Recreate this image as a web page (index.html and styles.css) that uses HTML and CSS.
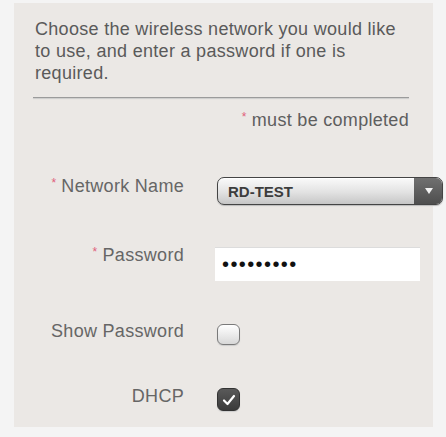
FILE: index.html
```html
<!DOCTYPE html>
<html lang="en">
<head>
  <meta charset="UTF-8" />
  <title>Wireless Network</title>
  <link rel="stylesheet" href="styles.css">
</head>
<body>
  <div class="panel">
    <p class="intro">Choose the wireless network you would like to use, and enter a password if one is required.</p>
    <div class="divider"></div>
    <div class="required-note"><span class="req">*</span> must be completed</div>

    <div class="fields">
      <div class="row">
        <label class="label"><span class="req">*</span> Network Name</label>
        <div class="select">
          <span class="select-value">RD-TEST</span>
          <span class="select-arrow"></span>
        </div>
      </div>
      <div class="row row-password">
        <label class="label"><span class="req">*</span> Password</label>
        <div class="text-input">•••••••••</div>
      </div>
      <div class="row row-check">
        <label class="label">Show Password</label>
        <div class="check"></div>
      </div>
      <div class="row row-dhcp">
        <label class="label">DHCP</label>
        <div class="check checked">
          <svg width="14" height="12" viewBox="0 0 14 12"><path d="M2 6.5 L5.5 10 L12 2" fill="none" stroke="#fff" stroke-width="2.2" stroke-linecap="round" stroke-linejoin="round"/></svg>
        </div>
      </div>
    </div>
  </div>
</body>
</html>
```

FILE: styles.css
```css
body {
  margin: 0;
  background: #f4f4f4;
  font-family: "Liberation Sans", Arial, sans-serif;
  height: 437px;
  overflow: hidden;
}

.panel {
  margin: 3px 0 0 14px;
  width: 376px;
  height: 409px;
  padding: 15px 24px 0 19px;
  box-sizing: content-box;
  background: #ebe8e5;
}

.intro {
  margin: 0;
  font-size: 18px;
  letter-spacing: 0.3px;
  line-height: 22px;
  color: #5a5a5a;
  padding-left: 2px;
}

.divider {
  margin-top: 13px;
  height: 1px;
  background: #9b9b9b;
  box-shadow: 0 1px 1px #c8c8c8;
}

.required-note {
  margin-top: 12px;
  text-align: right;
  font-size: 18px;
  letter-spacing: 0.3px;
  line-height: 21px;
  color: #5e5e5e;
}

.req {
  color: #e0607c;
  font-size: 12px;
  vertical-align: top;
  line-height: 14px;
  letter-spacing: 0;
}

.fields {
  margin-top: 45px;
  display: flex;
  flex-direction: column;
  gap: 40px;
}

.row {
  display: flex;
  align-items: flex-start;
  gap: 33px;
}

.row-dhcp {
  margin-top: 1px;
}

.label {
  width: 151px;
  flex-shrink: 0;
  text-align: right;
  font-size: 18px;
  letter-spacing: 0.3px;
  line-height: 20px;
  color: #666;
}

.select {
  flex-shrink: 0;
  margin-top: 1px;
  width: 224px;
  height: 26px;
  border: 1px solid #444;
  border-radius: 7px;
  background: linear-gradient(#fafafa, #e2e2e2 55%, #c6c6c6);
  box-shadow: inset 0 1px 0 #fff, 0 1px 1px #bbb;
  display: flex;
  align-items: center;
  overflow: hidden;
}

.select-value {
  flex: 1;
  padding-left: 10px;
  font-size: 15px;
  font-weight: bold;
  color: #3c3c3c;
}

.select-arrow {
  width: 28px;
  height: 100%;
  background: linear-gradient(#707070, #4e4e4e);
  position: relative;
}

.select-arrow::after {
  content: "";
  position: absolute;
  left: 11px;
  top: 10px;
  border-left: 4px solid transparent;
  border-right: 4px solid transparent;
  border-top: 6px solid #f2f2f2;
}

.text-input {
  flex-shrink: 0;
  margin-top: 2px;
  margin-left: -2px;
  width: 205px;
  height: 34px;
  padding-left: 7px;
  background: #fff;
  border-top: 1px solid #dcdcdc;
  box-sizing: border-box;
  font-size: 20px;
  line-height: 32px;
  letter-spacing: 1.4px;
  color: #111;
}

.check {
  margin-top: 3px;
  width: 21px;
  height: 19px;
  border: 1.5px solid #7a7a7a;
  border-radius: 6px;
  background: linear-gradient(#ffffff, #d8d8d8);
  box-shadow: 0 1px 1px #ccc;
}

.row-dhcp .check {
  margin-top: 2px;
  height: 21px;
}

.check.checked {
  border-color: #333;
  background: linear-gradient(#5a5a5a, #3a3a3a);
  display: flex;
  align-items: center;
  justify-content: center;
}
```
